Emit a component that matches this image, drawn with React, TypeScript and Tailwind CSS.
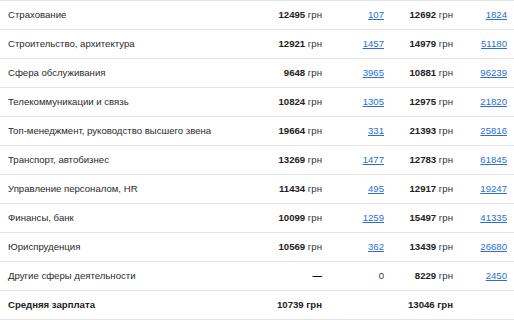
import React from "react";

type Row = { label: string; a: string | null; an: string; b: string; bn: string; bold?: boolean };

const rows: Row[] = [
  { label: "Страхование", a: "12495", an: "107", b: "12692", bn: "1824" },
  { label: "Строительство, архитектура", a: "12921", an: "1457", b: "14979", bn: "51180" },
  { label: "Сфера обслуживания", a: "9648", an: "3965", b: "10881", bn: "96239" },
  { label: "Телекоммуникации и связь", a: "10824", an: "1305", b: "12975", bn: "21820" },
  { label: "Топ-менеджмент, руководство высшего звена", a: "19664", an: "331", b: "21393", bn: "25816" },
  { label: "Транспорт, автобизнес", a: "13269", an: "1477", b: "12783", bn: "61845" },
  { label: "Управление персоналом, HR", a: "11434", an: "495", b: "12917", bn: "19247" },
  { label: "Финансы, банк", a: "10099", an: "1259", b: "15497", bn: "41335" },
  { label: "Юриспруденция", a: "10569", an: "362", b: "13439", bn: "26680" },
  { label: "Другие сферы деятельности", a: null, an: "0", b: "8229", bn: "2450" },
];

function Money({ v }: { v: string }) {
  return (
    <span>
      <b className="font-bold text-[#222]">{v}</b>
      <span className="text-[#333]"> грн</span>
    </span>
  );
}

export default function App() {
  return (
    <div
      className="w-[514px] h-[320px] bg-white border-t border-[#e3e3e3] text-[9.6px] text-[#2a2a2a]"
      style={{ fontFamily: '"Liberation Sans", Arial, sans-serif' }}
    >
      {rows.map((r) => (
        <div key={r.label} className="flex items-center h-[29px] border-b border-[#e3e3e3]">
          <div className="flex-1 pl-2">{r.label}</div>
          <div className="w-[82px] text-right">
            {r.a ? <Money v={r.a} /> : <span className="font-bold text-[#111]">—</span>}
          </div>
          <div className="w-[62px] text-right">
            {r.an === "0" ? (
              <span className="text-[#333]">0</span>
            ) : (
              <a href="#" className="text-[#2a6fd6] underline">{r.an}</a>
            )}
          </div>
          <div className="w-[69px] text-right">
            <Money v={r.b} />
          </div>
          <div className="w-[54px] text-right">
            <a href="#" className="text-[#2a6fd6] underline">{r.bn}</a>
          </div>
          <div className="w-[7px]" />
        </div>
      ))}
      <div className="flex items-center h-[29px] border-b border-[#e3e3e3] font-bold text-[#222]">
        <div className="flex-1 pl-2">Средняя зарплата</div>
        <div className="w-[82px] text-right">10739 грн</div>
        <div className="w-[62px]" />
        <div className="w-[69px] text-right">13046 грн</div>
        <div className="w-[54px]" />
        <div className="w-[7px]" />
      </div>
    </div>
  );
}
